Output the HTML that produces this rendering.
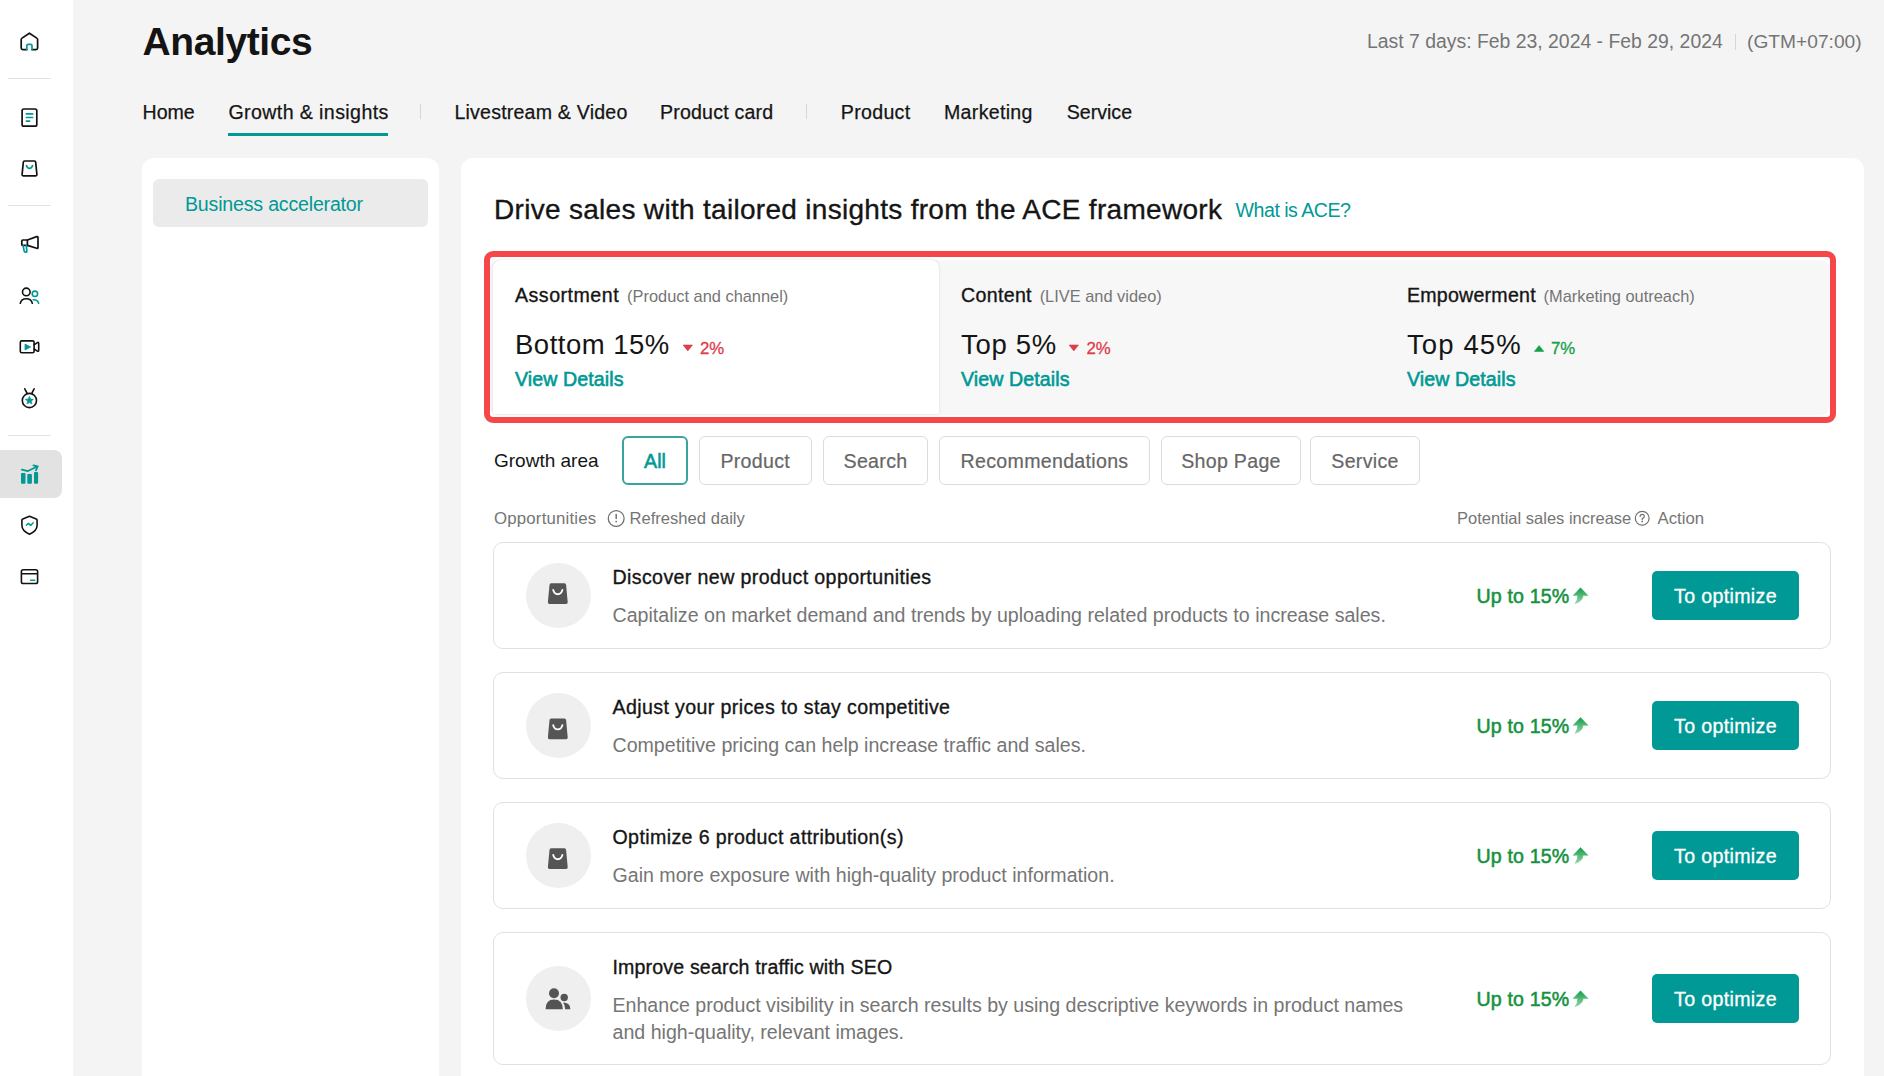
<!DOCTYPE html>
<html><head><meta charset="utf-8"><style>
html,body{margin:0;padding:0;}
body{width:1884px;height:1076px;overflow:hidden;background:#f4f4f4;position:relative;font-family:"Liberation Sans", sans-serif;}
.t{position:absolute;white-space:nowrap;line-height:1;}
</style></head><body>
<div style="position:absolute;left:0px;top:0px;width:73px;height:1076px;background:#fff;"></div>
<div style="position:absolute;left:8px;top:78px;width:43px;height:1px;background:#e3e3e3;"></div>
<div style="position:absolute;left:8px;top:205px;width:43px;height:1px;background:#e3e3e3;"></div>
<div style="position:absolute;left:8px;top:435px;width:43px;height:1px;background:#e3e3e3;"></div>
<div style="position:absolute;left:0px;top:450px;width:62px;height:47.5px;background:#e2e2e2;border-radius:0 8px 8px 0;"></div>
<div style="position:absolute;left:142px;top:158px;width:297px;height:960px;background:#fff;border-radius:12px;"></div>
<div style="position:absolute;left:153px;top:179px;width:275px;height:48px;background:#ebebeb;border-radius:6px;"></div>
<div class="t" style="left:185px;top:195.01px;font-size:19.6px;line-height:19.6px;color:#009995;letter-spacing:-0.2px;">Business accelerator</div>
<div style="position:absolute;left:461px;top:158px;width:1403px;height:960px;background:#fff;border-radius:12px;"></div>
<div class="t" style="left:142.5px;top:22.21px;font-size:39px;line-height:39px;color:#141414;font-weight:700;letter-spacing:-0.4px;">Analytics</div>
<div class="t" style="left:1367px;top:32.31px;font-size:19.4px;line-height:19.4px;color:#757575;">Last 7 days: Feb 23, 2024 - Feb 29, 2024</div>
<div style="position:absolute;left:1735px;top:34px;width:1px;height:16px;background:#d6d6d6;"></div>
<div class="t" style="left:1747px;top:32.31px;font-size:19.2px;line-height:19.2px;color:#757575;">(GTM+07:00)</div>
<div class="t" style="left:142.5px;top:103.01px;font-size:19.6px;line-height:19.6px;color:#151515;-webkit-text-stroke:0.25px #151515;width:61.5px;">Home</div>
<div class="t" style="left:228.4px;top:103.01px;font-size:19.6px;line-height:19.6px;color:#151515;-webkit-text-stroke:0.25px #151515;letter-spacing:0.4px;width:169.3px;">Growth &amp; insights</div>
<div class="t" style="left:454.4px;top:103.01px;font-size:19.6px;line-height:19.6px;color:#151515;-webkit-text-stroke:0.25px #151515;letter-spacing:0.2px;width:182px;">Livestream &amp; Video</div>
<div class="t" style="left:659.9px;top:103.01px;font-size:19.6px;line-height:19.6px;color:#151515;-webkit-text-stroke:0.25px #151515;letter-spacing:0.2px;width:123.3px;">Product card</div>
<div class="t" style="left:840.8px;top:103.01px;font-size:19.6px;line-height:19.6px;color:#151515;-webkit-text-stroke:0.25px #151515;letter-spacing:0.3px;width:79.6px;">Product</div>
<div class="t" style="left:944px;top:103.01px;font-size:19.6px;line-height:19.6px;color:#151515;-webkit-text-stroke:0.25px #151515;letter-spacing:0.3px;width:98.7px;">Marketing</div>
<div class="t" style="left:1066.7px;top:103.01px;font-size:19.6px;line-height:19.6px;color:#151515;-webkit-text-stroke:0.25px #151515;width:75.3px;">Service</div>
<div style="position:absolute;left:228px;top:133px;width:160px;height:3px;background:#009995;"></div>
<div style="position:absolute;left:420px;top:104px;width:1px;height:15px;background:#d6d6d6;"></div>
<div style="position:absolute;left:806px;top:104px;width:1px;height:15px;background:#d6d6d6;"></div>
<div class="t" style="left:494px;top:196.01px;font-size:28px;line-height:28px;color:#151515;-webkit-text-stroke:0.35px #151515;letter-spacing:0.3px;">Drive sales with tailored insights from the ACE framework</div>
<div class="t" style="left:1235.6px;top:200.71px;font-size:19.6px;line-height:19.6px;color:#009995;letter-spacing:-0.5px;">What is ACE?</div>
<div style="position:absolute;left:490px;top:260px;width:1339px;height:154.5px;background:#f7f7f7;border-radius:8px;"></div>
<div style="position:absolute;left:492.5px;top:260px;width:446.5px;height:154px;background:#fff;border-radius:8px 8px 0 0;box-shadow:0 0 3px rgba(0,0,0,0.13);"></div>
<div class="t" style="left:515px;top:286.41px;font-size:19.6px;line-height:19.6px;color:#151515;-webkit-text-stroke:0.35px #151515;letter-spacing:0.5px;">Assortment <span style="font-size:16.4px;color:#757575;margin-left:2px;letter-spacing:0;-webkit-text-stroke:0">(Product and channel)</span></div>
<div class="t" style="left:515px;top:331.10px;font-size:27.5px;line-height:27.5px;color:#151515;letter-spacing:0.5px;">Bottom 15%</div>
<div class="t" style="left:515px;top:370.21px;font-size:19.6px;line-height:19.6px;color:#009995;-webkit-text-stroke:0.6px #009995;letter-spacing:0.1px;">View Details</div>
<div class="t" style="left:699.9px;top:340.71px;font-size:16.8px;line-height:16.8px;color:#dd3c4a;-webkit-text-stroke:0.3px #dd3c4a;">2%</div>
<div class="t" style="left:961px;top:286.41px;font-size:19.6px;line-height:19.6px;color:#151515;-webkit-text-stroke:0.35px #151515;letter-spacing:0.32px;">Content <span style="font-size:16.4px;color:#757575;margin-left:2px;letter-spacing:0;-webkit-text-stroke:0">(LIVE and video)</span></div>
<div class="t" style="left:961px;top:331.10px;font-size:27.5px;line-height:27.5px;color:#151515;letter-spacing:0.7px;">Top 5%</div>
<div class="t" style="left:961px;top:370.21px;font-size:19.6px;line-height:19.6px;color:#009995;-webkit-text-stroke:0.6px #009995;letter-spacing:0.1px;">View Details</div>
<div class="t" style="left:1086.4px;top:340.71px;font-size:16.8px;line-height:16.8px;color:#dd3c4a;-webkit-text-stroke:0.3px #dd3c4a;">2%</div>
<div class="t" style="left:1407px;top:286.41px;font-size:19.6px;line-height:19.6px;color:#151515;-webkit-text-stroke:0.35px #151515;letter-spacing:0.23px;">Empowerment <span style="font-size:16.4px;color:#757575;margin-left:2px;letter-spacing:0;-webkit-text-stroke:0">(Marketing outreach)</span></div>
<div class="t" style="left:1407px;top:331.10px;font-size:27.5px;line-height:27.5px;color:#151515;letter-spacing:1.1px;">Top 45%</div>
<div class="t" style="left:1407px;top:370.21px;font-size:19.6px;line-height:19.6px;color:#009995;-webkit-text-stroke:0.6px #009995;letter-spacing:0.1px;">View Details</div>
<div class="t" style="left:1550.9px;top:340.71px;font-size:16.8px;line-height:16.8px;color:#16a04a;-webkit-text-stroke:0.3px #16a04a;">7%</div>
<div style="position:absolute;left:484px;top:251px;width:1340px;height:160px;border:6px solid #f5474a;border-radius:9px;box-sizing:content-box;"></div>
<div class="t" style="left:494px;top:451.01px;font-size:19px;line-height:19px;color:#151515;">Growth area</div>
<div style="position:absolute;left:622px;top:436px;width:66px;height:49px;border:2px solid #3aa3a0;border-radius:6px;box-sizing:border-box;"></div>
<div class="t" style="left:622px;top:452.01px;font-size:19.6px;line-height:19.6px;color:#009995;-webkit-text-stroke:0.55px #009995;width:66px;text-align:center;">All</div>
<div style="position:absolute;left:699px;top:436px;width:112.5px;height:49px;border:1px solid #dcdcdc;border-radius:6px;box-sizing:border-box;"></div>
<div class="t" style="left:699px;top:452.21px;font-size:19.6px;line-height:19.6px;color:#666;-webkit-text-stroke:0.2px #666;letter-spacing:0.3px;width:112.5px;text-align:center;">Product</div>
<div style="position:absolute;left:823px;top:436px;width:105px;height:49px;border:1px solid #dcdcdc;border-radius:6px;box-sizing:border-box;"></div>
<div class="t" style="left:823px;top:452.21px;font-size:19.6px;line-height:19.6px;color:#666;-webkit-text-stroke:0.2px #666;letter-spacing:0.3px;width:105px;text-align:center;">Search</div>
<div style="position:absolute;left:939px;top:436px;width:211px;height:49px;border:1px solid #dcdcdc;border-radius:6px;box-sizing:border-box;"></div>
<div class="t" style="left:939px;top:452.21px;font-size:19.6px;line-height:19.6px;color:#666;-webkit-text-stroke:0.2px #666;letter-spacing:0.3px;width:211px;text-align:center;">Recommendations</div>
<div style="position:absolute;left:1161px;top:436px;width:140px;height:49px;border:1px solid #dcdcdc;border-radius:6px;box-sizing:border-box;"></div>
<div class="t" style="left:1161px;top:452.21px;font-size:19.6px;line-height:19.6px;color:#666;-webkit-text-stroke:0.2px #666;letter-spacing:0.3px;width:140px;text-align:center;">Shop Page</div>
<div style="position:absolute;left:1310px;top:436px;width:110px;height:49px;border:1px solid #dcdcdc;border-radius:6px;box-sizing:border-box;"></div>
<div class="t" style="left:1310px;top:452.21px;font-size:19.6px;line-height:19.6px;color:#666;-webkit-text-stroke:0.2px #666;letter-spacing:0.3px;width:110px;text-align:center;">Service</div>
<div class="t" style="left:494px;top:511.30px;font-size:16.8px;line-height:16.8px;color:#757575;letter-spacing:0.2px;">Opportunities</div>
<div class="t" style="left:629.5px;top:511.31px;font-size:16.6px;line-height:16.6px;color:#757575;">Refreshed daily</div>
<div class="t" style="left:1457px;top:510.30px;font-size:16.5px;line-height:16.5px;color:#757575;">Potential sales increase</div>
<div class="t" style="left:1657.5px;top:511.30px;font-size:16.8px;line-height:16.8px;color:#757575;">Action</div>
<div style="position:absolute;left:493px;top:542px;width:1338px;height:107px;border:1px solid #e1e1e1;border-radius:10px;box-sizing:border-box;"></div>
<div style="position:absolute;left:525.5px;top:563.0px;width:65px;height:65px;background:#efefef;border-radius:50%;"></div>
<div class="t" style="left:612.5px;top:568.41px;font-size:19.6px;line-height:19.6px;color:#151515;-webkit-text-stroke:0.35px #151515;letter-spacing:0.38px;">Discover new product opportunities</div>
<div class="t" style="left:612.5px;top:602.02px;font-size:19.6px;line-height:27px;color:#757575;">Capitalize on market demand and trends by uploading related products to increase sales.</div>
<div class="t" style="left:1476.5px;top:587.32px;font-size:19.6px;line-height:19.6px;color:#16923f;-webkit-text-stroke:0.55px #16923f;letter-spacing:0.15px;">Up to 15%</div>
<div style="position:absolute;left:1651.5px;top:571.3px;width:147.5px;height:48.6px;background:#009995;border-radius:5px;"></div>
<div class="t" style="left:1652px;top:586.82px;font-size:19.6px;line-height:19.6px;color:#fff;-webkit-text-stroke:0.3px #fff;letter-spacing:0.35px;width:147px;text-align:center;">To optimize</div>
<div style="position:absolute;left:493px;top:671.5px;width:1338px;height:107.5px;border:1px solid #e1e1e1;border-radius:10px;box-sizing:border-box;"></div>
<div style="position:absolute;left:525.5px;top:692.75px;width:65px;height:65px;background:#efefef;border-radius:50%;"></div>
<div class="t" style="left:612.5px;top:697.91px;font-size:19.6px;line-height:19.6px;color:#151515;-webkit-text-stroke:0.35px #151515;letter-spacing:0.38px;">Adjust your prices to stay competitive</div>
<div class="t" style="left:612.5px;top:731.52px;font-size:19.6px;line-height:27px;color:#757575;">Competitive pricing can help increase traffic and sales.</div>
<div class="t" style="left:1476.5px;top:717.07px;font-size:19.6px;line-height:19.6px;color:#16923f;-webkit-text-stroke:0.55px #16923f;letter-spacing:0.15px;">Up to 15%</div>
<div style="position:absolute;left:1651.5px;top:701.05px;width:147.5px;height:48.6px;background:#009995;border-radius:5px;"></div>
<div class="t" style="left:1652px;top:716.57px;font-size:19.6px;line-height:19.6px;color:#fff;-webkit-text-stroke:0.3px #fff;letter-spacing:0.35px;width:147px;text-align:center;">To optimize</div>
<div style="position:absolute;left:493px;top:801.5px;width:1338px;height:107.5px;border:1px solid #e1e1e1;border-radius:10px;box-sizing:border-box;"></div>
<div style="position:absolute;left:525.5px;top:822.75px;width:65px;height:65px;background:#efefef;border-radius:50%;"></div>
<div class="t" style="left:612.5px;top:827.91px;font-size:19.6px;line-height:19.6px;color:#151515;-webkit-text-stroke:0.35px #151515;letter-spacing:0.38px;">Optimize 6 product attribution(s)</div>
<div class="t" style="left:612.5px;top:861.52px;font-size:19.6px;line-height:27px;color:#757575;">Gain more exposure with high-quality product information.</div>
<div class="t" style="left:1476.5px;top:847.07px;font-size:19.6px;line-height:19.6px;color:#16923f;-webkit-text-stroke:0.55px #16923f;letter-spacing:0.15px;">Up to 15%</div>
<div style="position:absolute;left:1651.5px;top:831.05px;width:147.5px;height:48.6px;background:#009995;border-radius:5px;"></div>
<div class="t" style="left:1652px;top:846.57px;font-size:19.6px;line-height:19.6px;color:#fff;-webkit-text-stroke:0.3px #fff;letter-spacing:0.35px;width:147px;text-align:center;">To optimize</div>
<div style="position:absolute;left:493px;top:932px;width:1338px;height:133px;border:1px solid #e1e1e1;border-radius:10px;box-sizing:border-box;"></div>
<div style="position:absolute;left:525.5px;top:966.0px;width:65px;height:65px;background:#efefef;border-radius:50%;"></div>
<div class="t" style="left:612.5px;top:958.41px;font-size:19.6px;line-height:19.6px;color:#151515;-webkit-text-stroke:0.35px #151515;letter-spacing:0.15px;">Improve search traffic with SEO</div>
<div class="t" style="left:612.5px;top:992.02px;font-size:19.6px;line-height:27px;color:#757575;">Enhance product visibility in search results by using descriptive keywords in product names<br>and high-quality, relevant images.</div>
<div class="t" style="left:1476.5px;top:990.32px;font-size:19.6px;line-height:19.6px;color:#16923f;-webkit-text-stroke:0.55px #16923f;letter-spacing:0.15px;">Up to 15%</div>
<div style="position:absolute;left:1651.5px;top:974.3px;width:147.5px;height:48.6px;background:#009995;border-radius:5px;"></div>
<div class="t" style="left:1652px;top:989.82px;font-size:19.6px;line-height:19.6px;color:#fff;-webkit-text-stroke:0.3px #fff;letter-spacing:0.35px;width:147px;text-align:center;">To optimize</div>
<svg style="position:absolute;left:0;top:0" width="1884" height="1076" viewBox="0 0 1884 1076"><path d="M26.8,49.6 H22.8 Q21.2,49.6 21.2,48 V39.6 Q21.2,38.6 22,38.1 L29.4,33.2 L36.8,38.1 Q37.6,38.6 37.6,39.6 V48 Q37.6,49.6 36,49.6 H32" fill="none" stroke="#121212" stroke-width="1.7" stroke-linecap="round" stroke-linejoin="round" /><path d="M26.8,49.6 V45.8 Q26.8,44.4 28.2,44.4 H30.6 Q32,44.4 32,45.8 V49.6" fill="none" stroke="#009995" stroke-width="1.7" stroke-linecap="round" stroke-linejoin="round" /><path d="M23.9,109 H35 Q36.8,109 36.8,110.8 V124.4 Q36.8,126.2 35,126.2 H23.9 Q22.1,126.2 22.1,124.4 V110.8 Q22.1,109 23.9,109 Z" fill="none" stroke="#121212" stroke-width="1.7" stroke-linecap="round" stroke-linejoin="round" /><path d="M26.4,113.9 H32.6 M26.4,117.5 H32.6 M26.4,121.1 H29.6" fill="none" stroke="#009995" stroke-width="1.7" stroke-linecap="round" stroke-linejoin="round" /><path d="M24.6,161 H34.3 Q35.6,161 35.7,162.3 L36.9,174.3 Q37,175.9 35.4,175.9 H23.6 Q22,175.9 22.1,174.3 L23.3,162.3 Q23.4,161 24.6,161 Z" fill="none" stroke="#121212" stroke-width="1.7" stroke-linecap="round" stroke-linejoin="round" /><path d="M26.4,165.6 Q27.3,168.4 29.5,168.4 Q31.7,168.4 32.6,165.6" fill="none" stroke="#009995" stroke-width="1.7" stroke-linecap="round" stroke-linejoin="round" /><path d="M22.8,240 H27.4 V245.4 H22.8 Q21.8,245.4 21.8,244.4 V241 Q21.8,240 22.8,240 Z" fill="none" stroke="#121212" stroke-width="1.7" stroke-linecap="round" stroke-linejoin="round" /><path d="M27.4,240 L36.7,236.6 Q38,236.2 38,237.5 V247.4 Q38,248.7 36.7,248.3 L27.4,245.4" fill="none" stroke="#121212" stroke-width="1.7" stroke-linecap="round" stroke-linejoin="round" /><path d="M23.1,245.6 L24.2,251.2 Q24.4,252.2 25.4,252.2 H25.9 Q26.9,252.2 26.8,251.2 L26.4,245.6" fill="none" stroke="#009995" stroke-width="1.7" stroke-linecap="round" stroke-linejoin="round" /><circle cx="26.3" cy="291.9" r="3.8" fill="none" stroke="#121212" stroke-width="1.6"/><path d="M20.3,303.3 Q21.2,298.8 26.3,298.8 Q31.4,298.8 32.3,303.3" fill="none" stroke="#121212" stroke-width="1.6" stroke-linecap="round" stroke-linejoin="round" /><circle cx="34.9" cy="293.8" r="2.7" fill="none" stroke="#009995" stroke-width="1.6"/><path d="M33.2,299.8 Q37.8,299.6 38.6,303.3" fill="none" stroke="#009995" stroke-width="1.6" stroke-linecap="round" stroke-linejoin="round" /><path d="M21.8,340.9 H32.6 Q34.1,340.9 34.1,342.4 V351.3 Q34.1,352.8 32.6,352.8 H21.8 Q20.3,352.8 20.3,351.3 V342.4 Q20.3,340.9 21.8,340.9 Z" fill="none" stroke="#121212" stroke-width="1.6" stroke-linecap="round" stroke-linejoin="round" /><path d="M34.1,344.8 L37.3,342.6 Q38.7,341.9 38.7,343.4 V350.3 Q38.7,351.8 37.3,351.1 L34.1,349" fill="none" stroke="#121212" stroke-width="1.6" stroke-linecap="round" stroke-linejoin="round" /><path d="M25,344 L30.6,347 L25,350 Z" fill="#009995" stroke="#009995" stroke-width="0.8" stroke-linejoin="round"/><circle cx="29.4" cy="400.5" r="7.1" fill="none" stroke="#121212" stroke-width="1.6"/><path d="M24.8,388.8 L27,393.2 M34.1,388.8 L31.9,393.2" fill="none" stroke="#121212" stroke-width="1.6" stroke-linecap="round" stroke-linejoin="round" /><path d="M29.40,396.40 L30.52,399.06 L33.39,399.30 L31.21,401.19 L31.87,404.00 L29.40,402.50 L26.93,404.00 L27.59,401.19 L25.41,399.30 L28.28,399.06 Z" fill="#009995" stroke="#009995" stroke-width="0.7" stroke-linejoin="round"/><rect x="21" y="473" width="4.5" height="10.699999999999989" rx="0.9" fill="#009995"/><rect x="27.3" y="474.1" width="4.599999999999998" height="9.599999999999966" rx="0.9" fill="#009995"/><rect x="34" y="472" width="4.100000000000001" height="11.699999999999989" rx="0.9" fill="#009995"/><path d="M21.8,469.6 L28,471.1 L37.2,466.5 M33.4,465.4 L37.8,466.4 L35.9,470.4" fill="none" stroke="#009995" stroke-width="1.7" stroke-linecap="round" stroke-linejoin="round" /><path d="M29.5,516.3 L22.8,518.9 Q21.9,519.3 21.9,520.2 V525.2 Q21.9,530.9 29.5,534.2 Q37.1,530.9 37.1,525.2 V520.2 Q37.1,519.3 36.2,518.9 Z" fill="none" stroke="#121212" stroke-width="1.6" stroke-linecap="round" stroke-linejoin="round" /><path d="M26.4,525.3 L28.5,523.2 L30.6,525.5 L33.2,522.8" fill="none" stroke="#009995" stroke-width="1.5" stroke-linecap="round" stroke-linejoin="round" /><path d="M23.2,569.8 H35.8 Q37.6,569.8 37.6,571.6 V581.7 Q37.6,583.5 35.8,583.5 H23.2 Q21.4,583.5 21.4,581.7 V571.6 Q21.4,569.8 23.2,569.8 Z M21.4,573.7 H37.6" fill="none" stroke="#121212" stroke-width="1.6" stroke-linecap="round" stroke-linejoin="round" /><path d="M30.6,580.3 H34.7" fill="none" stroke="#009995" stroke-width="1.6" stroke-linecap="round" stroke-linejoin="round" /><circle cx="616.2" cy="518.5" r="7.9" fill="none" stroke="#707070" stroke-width="1.3"/><path d="M616.2,514.6 V518.6" stroke="#707070" stroke-width="1.5" stroke-linecap="round"/><circle cx="616.2" cy="521.6" r="0.9" fill="#707070"/><circle cx="1642.2" cy="518.3" r="6.9" fill="none" stroke="#707070" stroke-width="1.2"/><path d="M1640,516.3 Q1640.4,514.3 1642.2,514.3 Q1644.3,514.3 1644.3,516.2 Q1644.3,517.4 1643,518.1 Q1642.2,518.6 1642.2,519.5" fill="none" stroke="#707070" stroke-width="1.2" stroke-linecap="round"/><circle cx="1642.2" cy="521.4" r="0.85" fill="#707070"/><path d="M683.1,345 H692.5 L687.8,350.9 Z" fill="#dd3c4a" stroke="#dd3c4a" stroke-width="0.6" stroke-linejoin="round"/><path d="M1069.1,345 H1078.5 L1073.8,350.9 Z" fill="#dd3c4a" stroke="#dd3c4a" stroke-width="0.6" stroke-linejoin="round"/><path d="M1534.4,351.4 H1543.8 L1539.1,345.5 Z" fill="#16a04a" stroke="#16a04a" stroke-width="0.6" stroke-linejoin="round"/><defs><linearGradient id="ag" x1="0" y1="0" x2="0" y2="1"><stop offset="0" stop-color="#0fa048"/><stop offset="1" stop-color="#9ad3a8"/></linearGradient></defs><path d="M551.1999999999999,583.3 H564.4 Q566.0,583.3 566.0999999999999,584.9 L567.6999999999999,602.0999999999999 Q567.9,604.0999999999999 566.0999999999999,604.0999999999999 H549.5 Q547.6999999999999,604.0999999999999 547.9,602.0999999999999 L549.5,584.9 Q549.5999999999999,583.3 551.1999999999999,583.3 Z" fill="#555555"/><path d="M553.1999999999999,589.9 Q554.1999999999999,594.1999999999999 557.8,594.1999999999999 Q561.4,594.1999999999999 562.4,589.9" fill="none" stroke="#fff" stroke-width="1.9" stroke-linecap="round"/><path d="M1580.5,587.8 L1588,595.6 H1583.1 Q1582.8,601.5 1575,603.7 Q1577.8,600.0 1577.7,595.6 H1573.1 Z" fill="url(#ag)" stroke="url(#ag)" stroke-width="0.5" stroke-linejoin="round"/><path d="M551.1999999999999,718.5 H564.4 Q566.0,718.5 566.0999999999999,720.1 L567.6999999999999,737.3 Q567.9,739.3 566.0999999999999,739.3 H549.5 Q547.6999999999999,739.3 547.9,737.3 L549.5,720.1 Q549.5999999999999,718.5 551.1999999999999,718.5 Z" fill="#555555"/><path d="M553.1999999999999,725.1 Q554.1999999999999,729.4 557.8,729.4 Q561.4,729.4 562.4,725.1" fill="none" stroke="#fff" stroke-width="1.9" stroke-linecap="round"/><path d="M1580.5,717.55 L1588,725.35 H1583.1 Q1582.8,731.25 1575,733.45 Q1577.8,729.75 1577.7,725.35 H1573.1 Z" fill="url(#ag)" stroke="url(#ag)" stroke-width="0.5" stroke-linejoin="round"/><path d="M551.1999999999999,848.3 H564.4 Q566.0,848.3 566.0999999999999,849.9 L567.6999999999999,867.0999999999999 Q567.9,869.0999999999999 566.0999999999999,869.0999999999999 H549.5 Q547.6999999999999,869.0999999999999 547.9,867.0999999999999 L549.5,849.9 Q549.5999999999999,848.3 551.1999999999999,848.3 Z" fill="#555555"/><path d="M553.1999999999999,854.9 Q554.1999999999999,859.1999999999999 557.8,859.1999999999999 Q561.4,859.1999999999999 562.4,854.9" fill="none" stroke="#fff" stroke-width="1.9" stroke-linecap="round"/><path d="M1580.5,847.55 L1588,855.35 H1583.1 Q1582.8,861.25 1575,863.45 Q1577.8,859.75 1577.7,855.35 H1573.1 Z" fill="url(#ag)" stroke="url(#ag)" stroke-width="0.5" stroke-linejoin="round"/><circle cx="554" cy="993.2" r="5" fill="#545454"/><path d="M545.6,1009.2 Q545.6,999.5 554,999.5 Q562.8,999.5 562.8,1009.2 Z" fill="#545454"/><circle cx="564.2" cy="997.5" r="3.7" fill="#545454"/><path d="M563,1002.5 Q570.4,1002.5 570.4,1009.2 H565.2 Q565.2,1005.0 563,1002.5 Z" fill="#545454"/><path d="M1580.5,990.8 L1588,998.6 H1583.1 Q1582.8,1004.5 1575,1006.7 Q1577.8,1003.0 1577.7,998.6 H1573.1 Z" fill="url(#ag)" stroke="url(#ag)" stroke-width="0.5" stroke-linejoin="round"/></svg>
</body></html>
